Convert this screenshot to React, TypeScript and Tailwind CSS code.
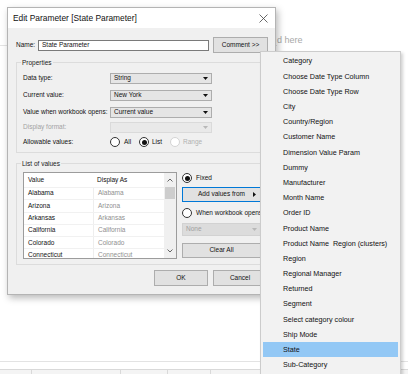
import type { ReactNode } from "react";

const menuItems = [
  "Category",
  "Choose Date Type Column",
  "Choose Date Type Row",
  "City",
  "Country/Region",
  "Customer Name",
  "Dimension Value Param",
  "Dummy",
  "Manufacturer",
  "Month Name",
  "Order ID",
  "Product Name",
  "Product Name  Region (clusters)",
  "Region",
  "Regional Manager",
  "Returned",
  "Segment",
  "Select category colour",
  "Ship Mode",
  "State",
  "Sub-Category",
];

const states = ["Alabama", "Arizona", "Arkansas", "California", "Colorado", "Connecticut"];

const propRows = [
  { label: "Data type:", value: "String", gap: "mt-0" },
  { label: "Current value:", value: "New York", gap: "mt-[6px]" },
  { label: "Value when workbook opens:", value: "Current value", gap: "mt-[6px]" },
  { label: "Display format:", value: "", gap: "mt-[4px]", disabled: true },
];

function Caret({ muted }: { muted?: boolean }) {
  return (
    <svg width="5" height="3" viewBox="0 0 5 3" className="shrink-0">
      <path d="M0 0h5L2.5 3z" fill={muted ? "#b8b8b8" : "#111"} />
    </svg>
  );
}

function Radio({ checked, disabled }: { checked?: boolean; disabled?: boolean }) {
  return (
    <span
      className={`flex h-[10px] w-[10px] shrink-0 items-center justify-center rounded-full border bg-white ${
        disabled ? "border-[#d4d4d4]" : "border-[#333]"
      }`}
    >
      {checked && <span className="h-[5px] w-[5px] rounded-full bg-[#111]" />}
    </span>
  );
}

function Select({ value, disabled }: { value: string; disabled?: boolean }) {
  return (
    <div
      className={`flex h-[11px] w-[102px] items-center justify-between border px-[3px] ${
        disabled ? "border-[#dadada] bg-[#e9e9e9]" : "border-[#adadad] bg-[#e5e5e5]"
      }`}
    >
      <span className="text-[6.5px] leading-none text-[#111]">{value}</span>
      <Caret muted={disabled} />
    </div>
  );
}

function GroupBox({ title, className, children }: { title: string; className: string; children: ReactNode }) {
  return (
    <div className={`relative ml-[8px] w-[252px] border border-[#dcdcdc] ${className}`}>
      <span className="absolute -top-[5px] left-[4px] bg-[#f0f0f0] px-px text-[6.5px] leading-[9px] text-[#1a1a1a]">
        {title}
      </span>
      {children}
    </div>
  );
}

function Button({ children, className }: { children: ReactNode; className: string }) {
  return (
    <div
      className={`flex items-center justify-center border border-[#adadad] bg-[#e1e1e1] text-[6.5px] leading-none text-[#111] ${className}`}
    >
      {children}
    </div>
  );
}

export default function App() {
  return (
    <div className="relative h-[374px] w-[408px] overflow-hidden bg-white font-['Liberation_Sans',Arial,sans-serif]">
      {/* worksheet behind the dialog */}
      <div className="flex h-full flex-col">
        <div className="flex h-[46px] items-end">
          <div className="h-[40px] w-[277px] border-b border-[#e4e4e4]" />
          <span className="text-[9px] leading-[12px] text-[#a9a9a9]">d here</span>
        </div>
        <div className="flex-1" />
        <div className="h-[8px] border-t border-[#e3e3e3]" />
        <div className="flex h-[5px] border-t border-[#d9d9d9] bg-[#f4f4f4]">
          <div className="w-[32px] border-r border-[#d9d9d9]" />
          <div className="w-[89px] border-r border-[#d9d9d9]" />
          <div className="w-[47px] border-r border-[#d9d9d9]" />
          <div className="w-[43px] border-r border-[#d9d9d9]" />
        </div>
      </div>

      {/* Edit Parameter dialog */}
      <div className="absolute left-[7px] top-[7px] flex h-[288px] w-[269px] flex-col border border-[#b4b4b4] shadow-[2px_3px_7px_rgba(0,0,0,0.28)]">
        <div className="flex h-[20px] items-center justify-between bg-white pl-[5px] pr-[7px]">
          <span className="text-[8.4px] leading-none text-[#111]">Edit Parameter [State Parameter]</span>
          <svg width="9" height="9" viewBox="0 0 9 9">
            <path d="M0.5 0.5l8 8M8.5 0.5l-8 8" stroke="#444" strokeWidth="0.8" />
          </svg>
        </div>

        <div className="flex flex-1 flex-col bg-[#f0f0f0] pt-[9px]">
          <div className="flex h-[16px] items-center pl-[8px]">
            <span className="w-[22px] text-[6.5px] leading-none text-[#111]">Name:</span>
            <div className="flex h-[11px] w-[171px] items-center border border-[#7a7a7a] bg-white pl-[3px] text-[6.5px] leading-none text-[#111]">
              State Parameter
            </div>
            <Button className="ml-[4px] h-[16px] w-[55px]">Comment &gt;&gt;</Button>
          </div>

          <GroupBox title="Properties" className="mt-[9px] h-[91px]">
            <div className="flex flex-col pl-[6px] pt-[10px]">
              {propRows.map((row) => (
                <div key={row.label} className={`flex items-center ${row.gap}`}>
                  <span
                    className={`w-[87px] text-[6.5px] leading-none ${row.disabled ? "text-[#a3a3a3]" : "text-[#111]"}`}
                  >
                    {row.label}
                  </span>
                  <Select value={row.value} disabled={row.disabled} />
                </div>
              ))}
              <div className="mt-[4px] flex h-[10px] items-center">
                <span className="w-[87px] text-[6.5px] leading-none text-[#111]">Allowable values:</span>
                <div className="flex w-[29px] items-center gap-[4px]">
                  <Radio />
                  <span className="text-[6.5px] leading-none text-[#111]">All</span>
                </div>
                <div className="flex w-[31px] items-center gap-[3px]">
                  <Radio checked />
                  <span className="text-[6.5px] leading-none text-[#111]">List</span>
                </div>
                <div className="flex items-center gap-[3px]">
                  <Radio disabled />
                  <span className="text-[6.5px] leading-none text-[#b0b0b0]">Range</span>
                </div>
              </div>
            </div>
          </GroupBox>

          <GroupBox title="List of values" className="mt-[10px] h-[102px]">
            <div className="flex gap-[5px] pl-[6px] pt-[8px]">
              <div className="flex h-[87px] w-[154px] overflow-hidden border border-[#9c9c9c] bg-white">
                <div className="flex flex-1 flex-col">
                  <div className="flex h-[14px] shrink-0 items-center text-[6.5px] leading-none text-[#111]">
                    <span className="w-[69px] pl-[4px]">Value</span>
                    <span className="pl-[4px]">Display As</span>
                  </div>
                  {states.map((s) => (
                    <div key={s} className="flex h-[12.3px] shrink-0 items-center border-t border-[#f1f1f1] text-[6.5px] leading-none">
                      <span className="w-[69px] pl-[4px] text-[#111]">{s}</span>
                      <span className="flex h-full items-center border-l border-[#eeeeee] pl-[4px] text-[#8f8f8f]">{s}</span>
                    </div>
                  ))}
                </div>
                <div className="flex w-[12px] flex-col bg-[#f0f0f0]">
                  <div className="flex h-[14px] items-center justify-center">
                    <svg width="6" height="4" viewBox="0 0 6 4">
                      <path d="M0.5 3.5L3 1l2.5 2.5" fill="none" stroke="#555" strokeWidth="0.9" />
                    </svg>
                  </div>
                  <div className="mx-[1px] h-[12px] bg-[#cdcdcd]" />
                  <div className="flex-1" />
                  <div className="flex h-[14px] items-center justify-center">
                    <svg width="6" height="4" viewBox="0 0 6 4">
                      <path d="M0.5 0.5L3 3l2.5-2.5" fill="none" stroke="#555" strokeWidth="0.9" />
                    </svg>
                  </div>
                </div>
              </div>

              <div className="flex w-[79px] flex-col">
                <div className="flex h-[12px] items-center gap-[4px]">
                  <Radio checked />
                  <span className="text-[6.5px] leading-none text-[#111]">Fixed</span>
                </div>
                <div className="relative mt-[3px] flex h-[15px] items-center justify-center border border-[#0078d7] bg-[#e1e1e1] text-[6.5px] leading-none text-[#111]">
                  Add values from
                  <svg width="3" height="5" viewBox="0 0 3 5" className="absolute right-[4px] top-[4px]">
                    <path d="M0 0l3 2.5L0 5z" fill="#111" />
                  </svg>
                </div>
                <div className="mt-[5px] flex h-[12px] items-center gap-[4px] whitespace-nowrap">
                  <Radio />
                  <span className="text-[6.5px] leading-none text-[#111]">When workbook opens</span>
                </div>
                <div className="mt-[4px] flex h-[13px] items-center justify-between border border-[#d2d2d2] bg-[#dcdcdc] px-[3px]">
                  <span className="text-[6.5px] leading-none text-[#a0a0a0]">None</span>
                  <Caret muted />
                </div>
                <Button className="mt-[7px] h-[15px]">Clear All</Button>
              </div>
            </div>
          </GroupBox>

          <div className="mt-[5px] flex justify-end gap-[5px] pr-[8px]">
            <Button className="h-[16px] w-[54px]">OK</Button>
            <Button className="h-[16px] w-[54px]">Cancel</Button>
          </div>
        </div>
      </div>

      {/* Add values from submenu */}
      <div className="absolute left-[260px] top-[51px] h-[330px] w-[141px] border border-[#cccccc] bg-[#f2f2f2] px-[2px] pt-[1.5px] shadow-[2px_2px_3px_rgba(0,0,0,0.18)]">
        {menuItems.map((item) => (
          <div
            key={item}
            className={`flex h-[15.2px] items-center whitespace-pre pl-[20px] text-[7.2px] leading-none text-[#111] ${
              item === "State" ? "bg-[#93c8f5]" : ""
            }`}
          >
            {item}
          </div>
        ))}
      </div>
    </div>
  );
}
